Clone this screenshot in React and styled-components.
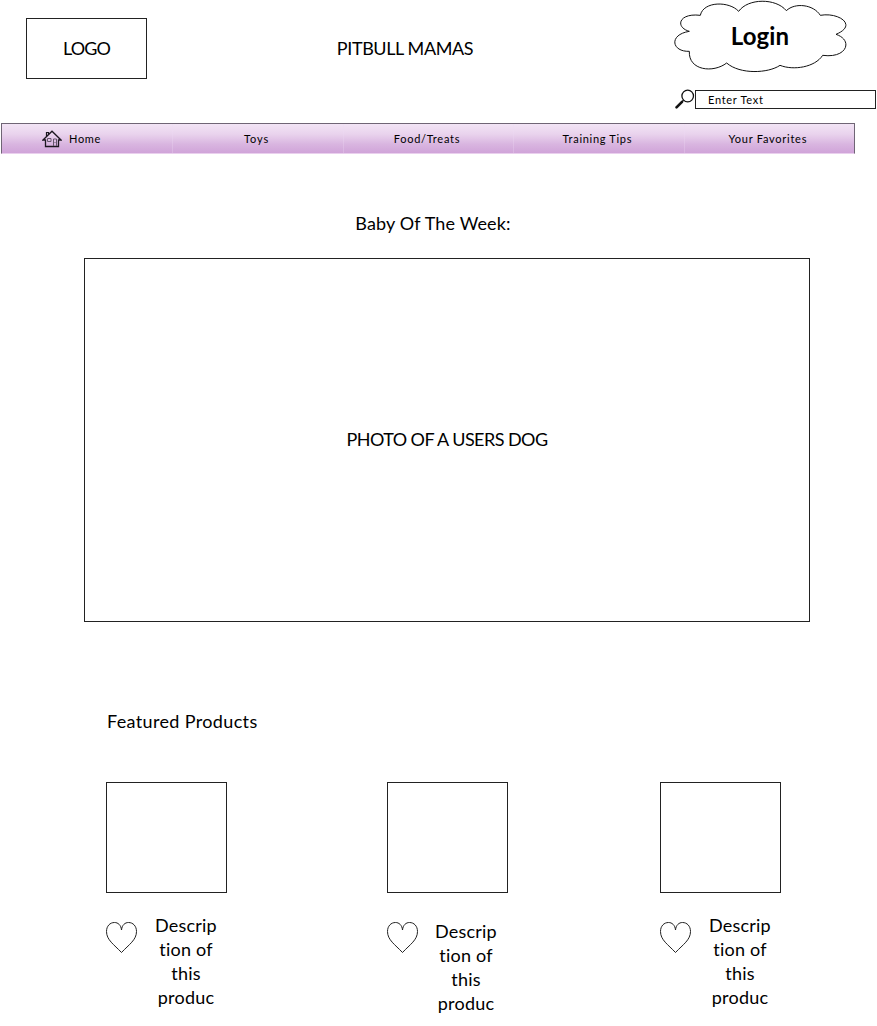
import React from 'react';
import styled, { createGlobalStyle } from 'styled-components';

const GlobalStyle = createGlobalStyle`
  * { box-sizing: border-box; }
  body { margin: 0; background: #fff; overflow: hidden; }
`;

const Page = styled.div`
  width: 877px;
  height: 1026px;
  overflow: hidden;
  color: #000;
  font-family: Lato, 'Liberation Sans', sans-serif;
  font-size: 18px;
  line-height: 24px;
  font-variant-ligatures: none;
`;

const Label = styled.span`
  white-space: nowrap;
  font-size: ${(p) => p.$size || 18}px;
  font-weight: ${(p) => (p.$bold ? 700 : 400)};
  letter-spacing: ${(p) => p.$track || 0}px;
`;

const Header = styled.header`
  display: grid;
  grid-template-columns: 121px 1fr 203px;
  height: 123px;
  padding-left: 26px;
`;

const Logo = styled.div`
  display: flex;
  align-items: center;
  justify-content: center;
  height: 61px;
  margin-top: 18px;
  padding-bottom: 2px;
  border: 1px solid #222;
`;

const Title = styled.h1`
  margin: 36px 11px 0 0;
  font-size: 18px;
  font-weight: 400;
  text-align: center;
`;

const Account = styled.div`
  display: flex;
  flex-direction: column;
`;

const LoginCloud = styled.a`
  display: grid;
  width: 174px;
  height: 74px;
  place-items: center;
  > * { grid-area: 1 / 1; }
  > span { margin: 0 2px 2px 0; }
`;

const Search = styled.div`
  display: flex;
  margin-top: 15px;
`;

const Field = styled.div`
  display: flex;
  align-items: center;
  width: 181px;
  height: 19px;
  margin-top: 1px;
  padding-left: 12px;
  border: 1px solid #222;
`;

const Nav = styled.nav`
  display: grid;
  grid-template-columns: repeat(5, 1fr);
  width: 854px;
  height: 31px;
  margin-left: 1px;
  border: 1px solid #6f6575;
  border-bottom-color: #ead0ee;
  background: linear-gradient(#f2e4f5, #e9d3ed 35%, #d9b5e0 70%, #d0a4d9);
`;

const NavItem = styled.a`
  display: flex;
  align-items: center;
  justify-content: ${(p) => (p.$icon ? 'flex-start' : 'center')};
  gap: 7px;
  padding: ${(p) => (p.$icon ? '0 0 0 40px' : '0 3px 0 0')};
  & + & { border-left: 1px solid rgba(240, 220, 244, 0.3); }
`;

const Spotlight = styled.section`
  display: flex;
  flex-direction: column;
  margin: 57px 0 0 84px;
  width: 726px;
`;

const SpotlightTitle = styled.h2`
  margin: 0 28px 23px 0;
  font-size: 18px;
  font-weight: 400;
  text-align: center;
`;

const Photo = styled.div`
  display: flex;
  align-items: center;
  justify-content: center;
  height: 364px;
  padding-bottom: 2px;
  border: 1px solid #222;
`;

const Featured = styled.section`
  margin: 87px 0 0 106px;
`;

const FeaturedTitle = styled.h2`
  margin: 0 0 49px 1px;
  font-size: 18px;
  font-weight: 400;
`;

const Products = styled.div`
  display: grid;
  grid-template-columns: 281px 273px 121px;
`;

const Thumb = styled.div`
  width: 121px;
  height: 111px;
  border: 1px solid #222;
`;

const Details = styled.div`
  display: flex;
  margin-top: 28px;
`;

const Description = styled.p`
  display: flex;
  flex-direction: column;
  align-items: center;
  width: 62px;
  margin: ${(p) => p.$top}px 0 0 ${(p) => p.$left}px;
`;

const CloudShape = () => (
  <svg width="174" height="74" viewBox="42 0 522 222" fill="none" stroke="#111" strokeWidth="3">
    <path d="M121 46C130 3 208 3 236 34C264-6 348-6 379 32C405 7 460 13 481 46C535 36 595 75 528 103C580 120 562 176 488 166C465 202 400 212 360 196C325 220 240 224 200 189C160 220 85 212 88 154C35 156 25 104 88 94C45 82 55 38 121 46Z" />
  </svg>
);

const SearchIcon = () => (
  <svg width="21" height="21" viewBox="0 0 21 21" fill="none" stroke="#111">
    <circle cx="13.7" cy="7" r="5.8" strokeWidth="1.3" />
    <path d="M9.5 11.3L7.5 13.3" strokeWidth="1.5" />
    <path d="M8 12.8L2.5 18.3" strokeWidth="2.6" strokeLinecap="round" />
  </svg>
);

const HomeIcon = () => (
  <svg width="20" height="18" viewBox="0 0 20 18" fill="none" stroke="#1c1720">
    <path d="M1 10L10 1.2L19 10H16.5V16.5H3.5V10Z" strokeWidth="1.3" />
    <path d="M4.5 6V2.5H6.5V4.5" strokeWidth="1.2" />
    <path d="M5.5 8.5H9V11.5H5.5ZM11.5 16V9H14.5V16M12.5 12.5H13.5" stroke="#66566c" />
  </svg>
);

const HeartIcon = () => (
  <svg width="32" height="33" viewBox="0 0 32 33" fill="none" stroke="#222">
    <path d="M15.5 9C15 4 12 1.5 8.5 1.5C4 1.5.5 5 .5 10.5C.5 19 8 23.5 15.5 31.5C23 23.5 30.5 19 30.5 10.5C30.5 5 27 1.5 22.5 1.5C19 1.5 16 4 15.5 9Z" />
  </svg>
);

const NAV = [
  { text: 'Home', icon: true, track: 0.7 },
  { text: 'Toys', track: 0.9 },
  { text: 'Food/Treats', track: 0.75 },
  { text: 'Training Tips', track: 0.7 },
  { text: 'Your Favorites', track: 0.75 },
];

const PRODUCTS = [
  { top: -8, left: 17 },
  { top: -2, left: 16 },
  { top: -8, left: 17 },
];

export default function App() {
  return (
    <Page>
      <GlobalStyle />
      <Header>
        <Logo><Label $track={-0.9}>LOGO</Label></Logo>
        <Title><Label $track={-0.4}>PITBULL MAMAS</Label></Title>
        <Account>
          <LoginCloud>
            <CloudShape />
            <Label $size={24} $bold $track={0.15}>Login</Label>
          </LoginCloud>
          <Search>
            <SearchIcon />
            <Field><Label $size={11} $track={0.7}>Enter Text</Label></Field>
          </Search>
        </Account>
      </Header>
      <Nav>
        {NAV.map((item) => (
          <NavItem key={item.text} $icon={item.icon}>
            {item.icon && <HomeIcon />}
            <Label $size={11} $track={item.track}>{item.text}</Label>
          </NavItem>
        ))}
      </Nav>
      <Spotlight>
        <SpotlightTitle><Label $track={0.15}>Baby Of The Week:</Label></SpotlightTitle>
        <Photo><Label $track={-0.55}>PHOTO OF A USERS DOG</Label></Photo>
      </Spotlight>
      <Featured>
        <FeaturedTitle><Label $track={0.35}>Featured Products</Label></FeaturedTitle>
        <Products>
          {PRODUCTS.map((product, i) => (
            <div key={i}>
              <Thumb />
              <Details>
                <HeartIcon />
                <Description $top={product.top} $left={product.left}>
                  {['Descrip', 'tion of', 'this', 'produc'].map((line) => (
                    <Label key={line} $track={0.2}>{line}</Label>
                  ))}
                </Description>
              </Details>
            </div>
          ))}
        </Products>
      </Featured>
    </Page>
  );
}
